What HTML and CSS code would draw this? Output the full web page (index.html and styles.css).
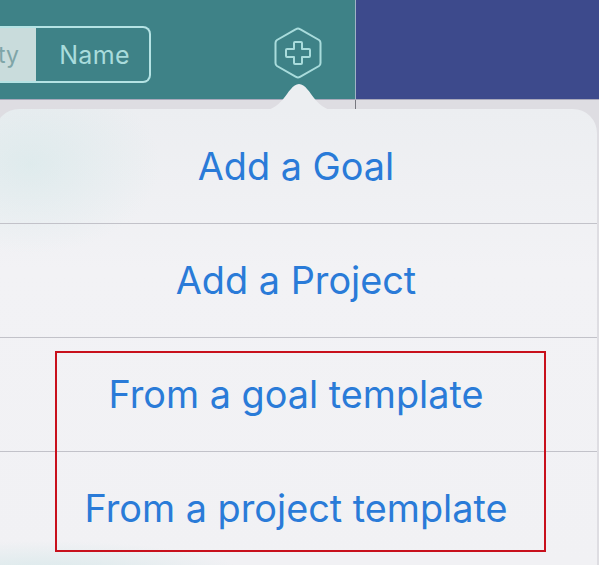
FILE: index.html
```html
<!DOCTYPE html>
<html lang="en">
<head>
    <meta charset="UTF-8">
    <title>Add menu</title>
    <link rel="stylesheet" href="styles.css">
</head>
<body>

<div class="ecran">
    <div class="barre">
        <div class="barre-gauche">
            <div class="segments">
                <div class="segment segment-actif">ty</div>
                <div class="segment">Name</div>
            </div>
            <svg class="bouton-ajout" width="48" height="52" viewBox="0 0 48 52" fill="none">
                <path d="M22 2.2 Q24 1 26 2.2 L45 13 Q46.5 14 46.5 16 V36 Q46.5 38 45 39 L26 49.8 Q24 51 22 49.8 L3 39 Q1.5 38 1.5 36 V16 Q1.5 14 3 13 Z" stroke="#a9dcdc" stroke-width="2"/>
                <path d="M20 16 Q20 15 21 15 H27 Q28 15 28 16 V22 H35 Q36 22 36 23 V29 Q36 30 35 30 H28 V36 Q28 37 27 37 H21 Q20 37 20 36 V30 H13 Q12 30 12 29 V23 Q12 22 13 22 H20 Z" stroke="#a9dcdc" stroke-width="2" stroke-linejoin="round"/>
            </svg>
        </div>
        <div class="barre-droite"></div>
    </div>

    <div class="fond">
        <svg class="fleche" width="70" height="28" viewBox="0 0 70 28">
            <path d="M0 28 C10 26 15 21 20 15 C24 10 29 1 35 1 C41 1 46 10 50 15 C55 21 60 26 70 28 Z" fill="#eceef1"/>
        </svg>
        <div class="menu">
            <div class="ligne">Add a Goal</div>
            <div class="ligne">Add a Project</div>
            <div class="ligne">From a goal template</div>
            <div class="ligne">From a project template</div>
        </div>
    </div>

    <div class="cadre-rouge"></div>
</div>

</body>
</html>
```

FILE: styles.css
```css
html, body {
    margin: 0;
    padding: 0;
}

body {
    width: 599px;
    height: 565px;
    overflow: hidden;
    font-family: Inter, "Liberation Sans", sans-serif;
}

.ecran {
    position: relative;
    width: 599px;
    height: 565px;
    overflow: hidden;
}

.barre {
    display: flex;
    height: 99px;
    border-bottom: 1px solid #a9a9bb;
}

.barre-gauche {
    width: 355px;
    display: flex;
    align-items: flex-start;
    background: #3e8287;
    border-right: 1px solid #9fb4c4;
}

.barre-droite {
    flex: 1;
    background: #3d4a8c;
}

.segments {
    display: flex;
    height: 53px;
    margin-top: 26px;
    border: 2px solid #b5e3e4;
    border-left: none;
    border-radius: 0 8px 8px 0;
    font-size: 25px;
    letter-spacing: 0.3px;
}

.segment {
    width: 109px;
    padding-left: 4px;
    display: flex;
    align-items: center;
    justify-content: center;
    color: #a9dcdc;
}

.segment-actif {
    width: 36px;
    padding-left: 0;
    padding-right: 17px;
    justify-content: flex-end;
    box-sizing: border-box;
    background: #c9dcdc;
    color: #7fa5a8;
    font-size: 23px;
    letter-spacing: 0;
}

.bouton-ajout {
    position: absolute;
    left: 274px;
    top: 27px;
}

.fond {
    position: relative;
    height: 465px;
    padding-top: 9px;
    padding-right: 2px;
    box-sizing: border-box;
    background: #dedde2;
}

/* le trait de la barre continue derriere le menu */
.fond::before {
    content: "";
    position: absolute;
    left: 355px;
    top: 0;
    width: 1px;
    height: 9px;
    background: #77777f;
}

.fleche {
    position: absolute;
    left: 264px;
    top: -17px;
}

.menu {
    height: 456px;
    margin-left: -5px;
    padding-top: 1px;
    border-radius: 24px 24px 0 0;
    background:
        radial-gradient(ellipse 130px 90px at 35px 55px, rgba(200, 228, 228, 0.4), transparent),
        radial-gradient(ellipse 200px 34px at 50px 466px, rgba(180, 220, 220, 0.4), transparent),
        linear-gradient(#eceef1, #f2f2f5 35%, #f1f1f4);
    display: flex;
    flex-direction: column;
}

.ligne {
    height: 114px;
    flex-shrink: 0;
    padding-bottom: 2px;
    box-sizing: border-box;
    display: flex;
    align-items: center;
    justify-content: center;
    border-bottom: 1px solid #c2c2c9;
    color: #2a7bd8;
    font-size: 37.8px;
}

.ligne:last-child {
    border-bottom: none;
}

.cadre-rouge {
    position: absolute;
    left: 55px;
    top: 351px;
    width: 491px;
    height: 201px;
    box-sizing: border-box;
    border: 2px solid #c8101c;
}
```
